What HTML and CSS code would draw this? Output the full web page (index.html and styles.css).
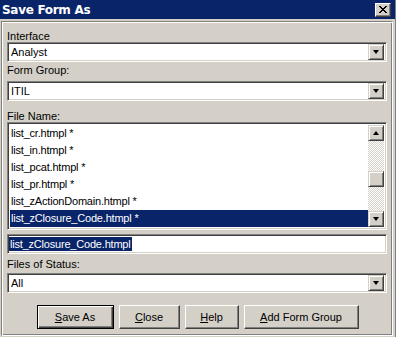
FILE: index.html
```html
<!DOCTYPE html>
<html>
<head>
<meta charset="utf-8">
<link rel="stylesheet" href="styles.css">
</head>
<body>
<div class="window">
  <div class="titlebar">
    <span class="title">Save Form As</span>
    <span class="close-btn">
      <svg width="8" height="7" viewBox="0 0 8 7"><path d="M0 0h2v1h1v1h2v-1h1v-1h2v1h-1v1h-1v1h-1v1h1v1h1v1h1v1h-2v-1h-1v-1h-2v1h-1v1h-2v-1h1v-1h1v-1h1v-1h-1v-1h-1v-1h-1z" fill="#000"/></svg>
    </span>
  </div>
  <div class="panel">
    <div class="label l-interface">Interface</div>
    <div class="combo c-interface">
      <span class="combo-text">Analyst</span>
      <span class="drop-btn"><span class="arrow"></span></span>
    </div>
    <div class="label l-group">Form Group:</div>
    <div class="combo c-group">
      <span class="combo-text">ITIL</span>
      <span class="drop-btn"><span class="arrow"></span></span>
    </div>
    <div class="label l-file">File Name:</div>
    <div class="listbox">
      <ul class="items">
        <li>list_cr.htmpl *</li>
        <li>list_in.htmpl *</li>
        <li>list_pcat.htmpl *</li>
        <li>list_pr.htmpl *</li>
        <li>list_zActionDomain.htmpl *</li>
        <li class="sel">list_zClosure_Code.htmpl *</li>
      </ul>
      <div class="scrollbar">
        <span class="sb-btn"><span class="arrow up"></span></span>
        <span class="sb-track"></span>
        <span class="sb-btn thumb"></span>
        <span class="sb-track short"></span>
        <span class="sb-btn"><span class="arrow"></span></span>
      </div>
    </div>
    <div class="textfield"><span class="seltext">list_zClosure_Code.htmpl</span></div>
    <div class="label l-status">Files of Status:</div>
    <div class="combo c-status">
      <span class="combo-text">All</span>
      <span class="drop-btn"><span class="arrow"></span></span>
    </div>
    <div class="buttons">
      <button class="btn default"><u>S</u>ave As</button>
      <button class="btn b-close"><u>C</u>lose</button>
      <button class="btn b-help"><u>H</u>elp</button>
      <button class="btn b-add"><u>A</u>dd Form Group</button>
    </div>
  </div>
</div>
</body>
</html>
```
FILE: styles.css
```css
* { box-sizing: border-box; }
html, body { margin: 0; padding: 0; }
body {
  width: 396px;
  height: 337px;
  background: #d4d0c8;
  font-family: "Liberation Sans", Arial, sans-serif;
  font-size: 11px;
  color: #000;
  overflow: hidden;
}
.window {
  width: 396px;
  height: 337px;
  display: flex;
  flex-direction: column;
  border-right: 1px solid #808080;
}
.titlebar {
  height: 19px;
  background: #0a246a;
  display: flex;
  align-items: center;
  justify-content: space-between;
  padding: 0 4px 0 2px;
  flex: none;
}
.title {
  color: #fff;
  font-weight: bold;
  font-size: 12px;
  font-family: "DejaVu Sans", "Liberation Sans", sans-serif;
  letter-spacing: -0.3px;
}
.close-btn {
  width: 16px;
  height: 14px;
  background: #d4d0c8;
  border-top: 1px solid #fff;
  border-left: 1px solid #fff;
  border-right: 1px solid #404040;
  border-bottom: 1px solid #404040;
  box-shadow: inset -1px -1px 0 #808080;
  display: flex;
  align-items: center;
  justify-content: center;
  padding: 0 1px 1px 0;
}
.close-btn svg { display: block; }
.panel {
  margin: 2px 2px 1px 1px;
  flex: 1;
  border-top: 1px solid #808080;
  border-left: 1px solid #808080;
  border-right: 1px solid #fff;
  border-bottom: 1px solid #fff;
  box-shadow: inset 1px 1px 0 #fff, inset -1px -1px 0 #808080;
  padding: 0 5px 0 5px;
  display: flex;
  flex-direction: column;
}
.label {
  line-height: 12px;
  height: 12px;
  white-space: nowrap;
}
.l-interface { margin-top: 8px; }
.l-group { margin-top: 2px; }
.l-file { margin-top: 9px; }
.l-status { margin-top: 4px; }
.combo {
  height: 20px;
  background: #fff;
  border-top: 1px solid #808080;
  border-left: 1px solid #808080;
  border-right: 1px solid #fff;
  border-bottom: 1px solid #fff;
  box-shadow: inset 1px 1px 0 #404040, inset -1px -1px 0 #d4d0c8;
  display: flex;
  align-items: center;
  justify-content: space-between;
  padding: 2px 2px 2px 3px;
}
.c-group { margin-top: 5px; }
.c-status { margin-top: 3px; }
.combo-text { line-height: 14px; }
.drop-btn {
  width: 16px;
  height: 16px;
  background: #d4d0c8;
  border-top: 1px solid #d4d0c8;
  border-left: 1px solid #d4d0c8;
  border-right: 1px solid #404040;
  border-bottom: 1px solid #404040;
  box-shadow: inset 1px 1px 0 #fff, inset -1px -1px 0 #808080;
  display: flex;
  align-items: center;
  justify-content: center;
}
.arrow {
  width: 0;
  height: 0;
  border-left: 3.5px solid transparent;
  border-right: 3.5px solid transparent;
  border-top: 4px solid #000;
}
.arrow.up {
  border-top: 0;
  border-bottom: 4px solid #000;
}
.listbox {
  height: 108px;
  background: #fff;
  border-top: 1px solid #808080;
  border-left: 1px solid #808080;
  border-right: 1px solid #fff;
  border-bottom: 1px solid #fff;
  box-shadow: inset 1px 1px 0 #404040, inset -1px -1px 0 #d4d0c8;
  padding: 2px;
  display: flex;
}
.items {
  list-style: none;
  margin: 0;
  padding: 0;
  flex: 1;
}
.items li {
  height: 17px;
  line-height: 17px;
  padding-left: 1px;
  white-space: nowrap;
  letter-spacing: -0.2px;
}
.items li.sel {
  background: #0a246a;
  color: #fff;
}
.scrollbar {
  width: 16px;
  display: flex;
  flex-direction: column;
}
.sb-btn {
  height: 16px;
  flex: none;
  background: #d4d0c8;
  border-top: 1px solid #d4d0c8;
  border-left: 1px solid #d4d0c8;
  border-right: 1px solid #404040;
  border-bottom: 1px solid #404040;
  box-shadow: inset 1px 1px 0 #fff, inset -1px -1px 0 #808080;
  display: flex;
  align-items: center;
  justify-content: center;
}
.sb-track {
  flex: 1;
  background: repeating-conic-gradient(#fff 0 25%, #d4d0c8 0 50%) 0 0 / 2px 2px;
}
.sb-track.short { flex: 0 0 24px; }
.textfield {
  margin-top: 4px;
  height: 20px;
  background: #fff;
  border-top: 1px solid #808080;
  border-left: 1px solid #808080;
  border-right: 1px solid #fff;
  border-bottom: 1px solid #fff;
  box-shadow: inset 1px 1px 0 #404040, inset -1px -1px 0 #d4d0c8;
  padding: 2px 1px;
  display: flex;
  align-items: center;
}
.seltext {
  background: #0a246a;
  color: #fff;
  line-height: 14px;
  padding: 0 1px;
  letter-spacing: -0.2px;
}
.buttons {
  margin-top: 12px;
  display: flex;
  justify-content: center;
  gap: 5px;
  padding-left: 1px;
}
.btn {
  height: 24px;
  font-family: "Liberation Sans", Arial, sans-serif;
  font-size: 11px;
  background: #d4d0c8;
  color: #000;
  padding: 0;
  margin: 0;
  border-top: 1px solid #fff;
  border-left: 1px solid #fff;
  border-right: 1px solid #404040;
  border-bottom: 1px solid #404040;
  box-shadow: inset -1px -1px 0 #808080;
}
.btn.default {
  width: 77px;
  border: 1px solid #000;
  box-shadow: inset 1px 1px 0 #fff, inset -1px -1px 0 #404040, inset -2px -2px 0 #808080;
}
.b-close { width: 61px; }
.b-help { width: 54px; }
.b-add { width: 115px; }
```
